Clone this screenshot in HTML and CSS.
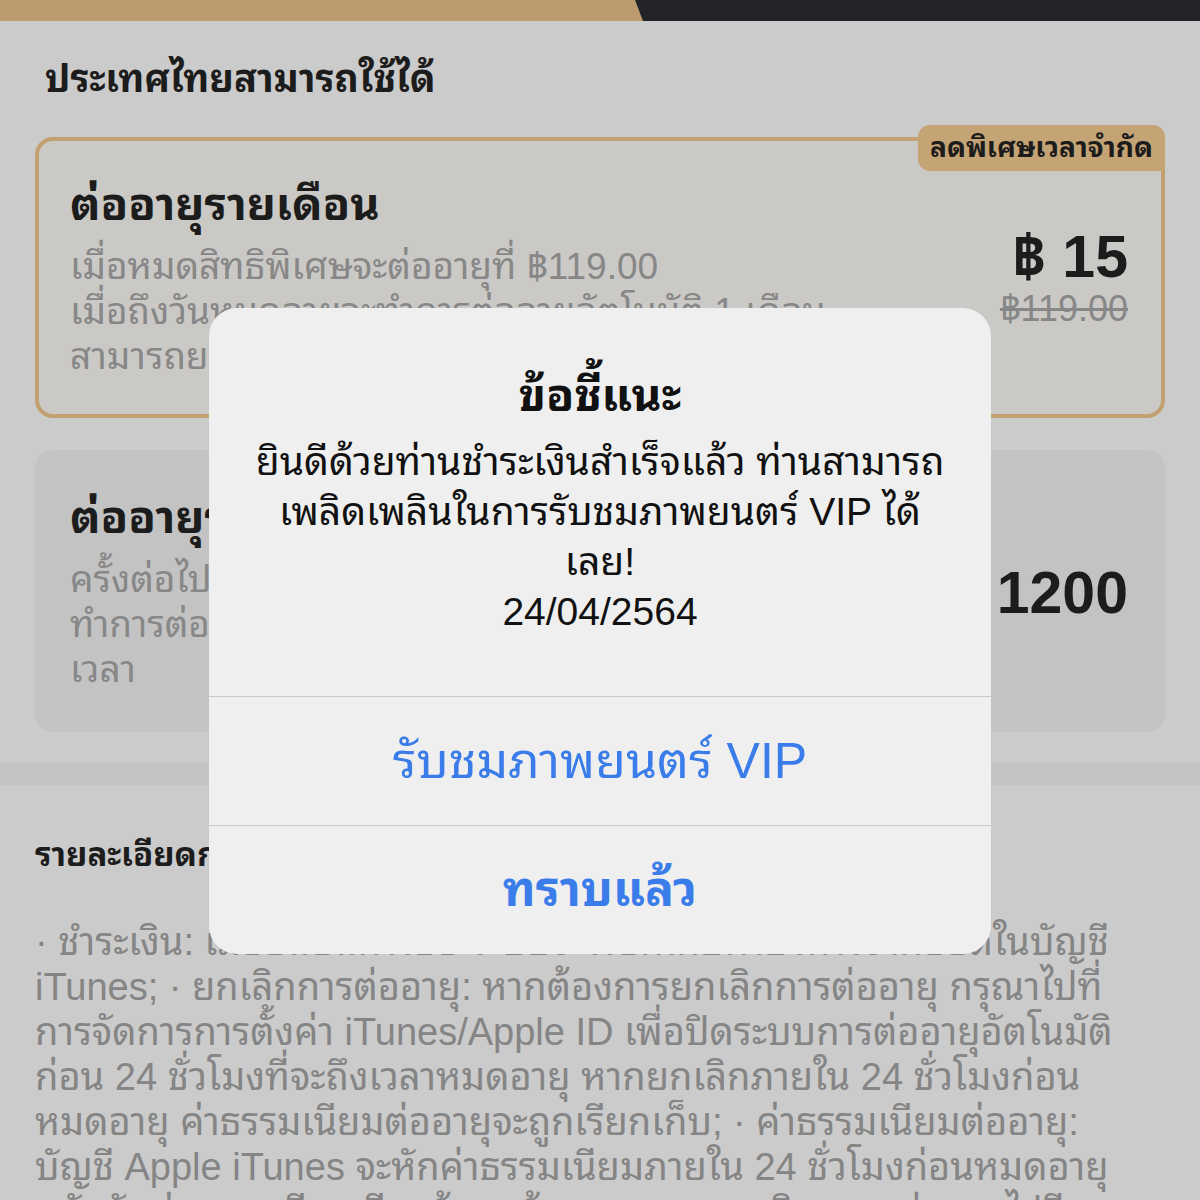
FILE: index.html
```html
<!DOCTYPE html>
<html lang="th">
<head>
    <meta charset="UTF-8">
    <title>VIP</title>
    <link rel="stylesheet" href="styles.css">
</head>
<body>
    <div class="topbar"><div class="topbar-gold"></div></div>

    <h2 class="region">ประเทศไทยสามารถใช้ได้</h2>

    <div class="plans">
        <div class="plan plan-active">
            <div class="badge">ลดพิเศษเวลาจำกัด</div>
            <div class="plan-info">
                <div class="plan-name">ต่ออายุรายเดือน</div>
                <div class="plan-line">เมื่อหมดสิทธิพิเศษจะต่ออายุที่ ฿119.00</div>
                <div class="plan-line">เมื่อถึงวันหมดอายุจะทำการต่ออายุอัตโนมัติ 1 เดือน</div>
                <div class="plan-line">สามารถยกเลิกได้ตลอดเวลา</div>
            </div>
            <div class="plan-price">
                <div class="price-now">฿ 15</div>
                <div class="price-old">฿119.00</div>
            </div>
        </div>

        <div class="plan">
            <div class="plan-info">
                <div class="plan-name">ต่ออายุรายปี</div>
                <div class="plan-line">ครั้งต่อไปจะต่ออายุที่ ฿1200.00</div>
                <div class="plan-line">ทำการต่ออายุอัตโนมัติ 1 ปี ยกเลิกได้ตลอด</div>
                <div class="plan-line">เวลา</div>
            </div>
            <div class="plan-price">
                <div class="price-now">฿ 1200</div>
            </div>
        </div>
    </div>

    <div class="band"></div>

    <div class="details">
        <div class="details-title">รายละเอียดการสมัครสมาชิก</div>
        <div class="details-text">
            <div class="row">· ชำระเงิน: เมื่อยืนยันการซื้อ ระบบจะเรียกเก็บค่าบริการจากยอดในบัญชี</div>
            <div class="row">iTunes; · ยกเลิกการต่ออายุ: หากต้องการยกเลิกการต่ออายุ กรุณาไปที่</div>
            <div class="row">การจัดการการตั้งค่า iTunes/Apple ID เพื่อปิดระบบการต่ออายุอัตโนมัติ</div>
            <div class="row">ก่อน 24 ชั่วโมงที่จะถึงเวลาหมดอายุ หากยกเลิกภายใน 24 ชั่วโมงก่อน</div>
            <div class="row">หมดอายุ ค่าธรรมเนียมต่ออายุจะถูกเรียกเก็บ; · ค่าธรรมเนียมต่ออายุ:</div>
            <div class="row">บัญชี Apple iTunes จะหักค่าธรรมเนียมภายใน 24 ชั่วโมงก่อนหมดอายุ</div>
            <div class="row">หลังหักค่าธรรมเนียมเรียบร้อยแล้ว ระยะเวลาสมาชิกจะถูกต่ออายุไปอีก</div>
        </div>
    </div>

    <!-- alert over the page -->
    <div class="alert">
        <div class="alert-body">
            <div class="alert-title">ข้อชี้แนะ</div>
            <div class="alert-msg">ยินดีด้วยท่านชำระเงินสำเร็จแล้ว ท่านสามารถ<br>เพลิดเพลินในการรับชมภาพยนตร์ VIP ได้<br>เลย!<br>24/04/2564</div>
        </div>
        <div class="alert-btn">รับชมภาพยนตร์ VIP</div>
        <div class="alert-btn alert-btn-bold">ทราบแล้ว</div>
    </div>
</body>
</html>
```

FILE: styles.css
```css
body {
    margin: 0;
    height: 1200px;
    overflow: hidden;
    position: relative;
    background-color: #cbcbcb;
    font-family: 'Liberation Sans', 'Noto Sans Thai Looped', 'Loma', 'Garuda', 'Noto Sans Thai', sans-serif;
    color: #1c1c1c;
}
.topbar {
    height: 21px;
    background-color: #232428;
    position: relative;
}
.topbar-gold {
    height: 100%;
    background-color: #bb9b6e;
    clip-path: polygon(0 0, 635px 0, 643px 100%, 0 100%);
}
.region {
    margin: 0;
    padding: 36px 0 0 45px;
    height: 80px;
    box-sizing: border-box;
    font-size: 38px;
    line-height: 44px;
    font-weight: bold;
    color: #1c1c1c;
}
.plans {
    display: flex;
    flex-direction: column;
    gap: 32px;
    padding: 36px 35px 0;
}
.plan {
    position: relative;
    display: flex;
    justify-content: space-between;
    height: 282px;
    box-sizing: border-box;
    padding: 43px 37px 0 35px;
    border-radius: 18px;
    background-color: #c3c3c3;
}
.plan-active {
    height: 281px;
    padding: 39px 33px 0 31px;
    border: 4px solid #c2a070;
    background-color: #cbc9c6;
}
.badge {
    position: absolute;
    top: -16px;
    right: -4px;
    height: 46px;
    padding: 0 12px;
    border-radius: 12px 12px 0 12px;
    background-color: #c4a374;
    font-size: 28px;
    line-height: 46px;
    font-weight: bold;
    color: #1c1c1c;
}
.plan-name {
    font-size: 45px;
    line-height: 50px;
    font-weight: bold;
    margin-bottom: 14px;
}
.plan-line {
    font-size: 37px;
    line-height: 45px;
    color: #878787;
    white-space: nowrap;
}
.plan-price {
    align-self: center;
    margin-top: -40px;
    text-align: right;
}
.price-now {
    font-size: 59px;
    line-height: 64px;
    font-weight: bold;
}
.price-old {
    font-size: 36px;
    line-height: 40px;
    color: #878787;
    text-decoration: line-through;
}
.band {
    height: 23px;
    margin-top: 30px;
    background-color: #c4c4c4;
}
.details {
    padding: 50px 35px 0;
}
.details-title {
    font-size: 33px;
    line-height: 40px;
    font-weight: bold;
    margin-bottom: 45px;
}
.details-text {
    font-size: 38px;
    line-height: 45px;
    color: #858585;
}
.row {
    white-space: nowrap;
}
.alert {
    position: absolute;
    left: 209px;
    top: 308px;
    width: 782px;
    border-radius: 28px;
    background-color: #efefef;
    overflow: hidden;
    text-align: center;
}
.alert-body {
    height: 388px;
    box-sizing: border-box;
    padding-top: 62px;
}
.alert-title {
    font-size: 46px;
    line-height: 50px;
    font-weight: bold;
    color: #111;
}
.alert-msg {
    margin-top: 17px;
    font-size: 39px;
    line-height: 50px;
    color: #111;
}
.alert-btn {
    height: 128px;
    border-top: 1px solid #c9c9c9;
    font-size: 50px;
    line-height: 128px;
    color: #3a7ce9;
}
.alert-btn-bold {
    font-size: 48px;
    font-weight: bold;
}
```
